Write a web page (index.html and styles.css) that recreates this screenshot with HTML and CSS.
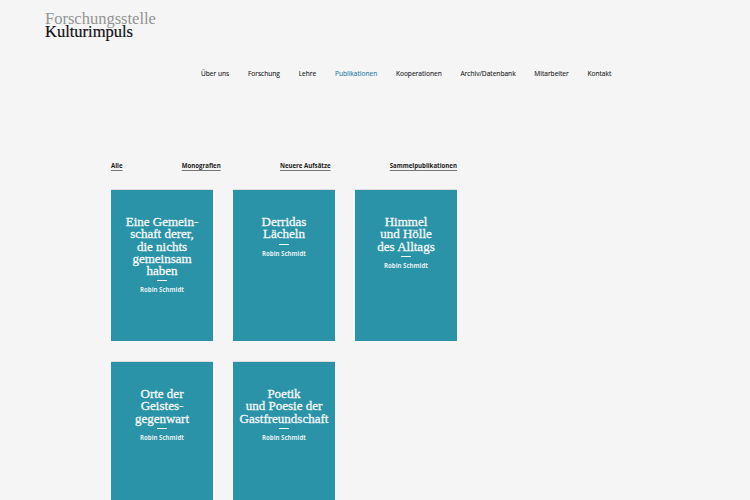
FILE: index.html
```html
<!DOCTYPE html>
<html lang="de">
<head>
<meta charset="utf-8">
<title>Publikationen – Forschungsstelle Kulturimpuls</title>
<link rel="stylesheet" href="styles.css">
</head>
<body>
<header class="header">
  <div class="logo">
    <span class="logo-top">Forschungsstelle</span>
    <span class="logo-bottom">Kulturimpuls</span>
  </div>
  <nav class="nav">
    <a href="#">Über uns</a>
    <a href="#">Forschung</a>
    <a href="#">Lehre</a>
    <a href="#" class="active">Publikationen</a>
    <a href="#">Kooperationen</a>
    <a href="#">Archiv/Datenbank</a>
    <a href="#">Mitarbeiter</a>
    <a href="#">Kontakt</a>
  </nav>
</header>
<main class="content">
  <div class="filters">
    <a href="#">Alle</a>
    <a href="#">Monografien</a>
    <a href="#">Neuere Aufsätze</a>
    <a href="#">Sammelpublikationen</a>
  </div>
  <div class="grid">
    <div class="card">
      <div class="title">Eine Gemein-<br>schaft derer,<br>die nichts<br>gemeinsam<br>haben</div>
      <div class="dash"></div>
      <div class="author">Robin Schmidt</div>
    </div>
    <div class="card">
      <div class="title">Derridas<br>Lächeln</div>
      <div class="dash"></div>
      <div class="author">Robin Schmidt</div>
    </div>
    <div class="card">
      <div class="title">Himmel<br>und Hölle<br>des Alltags</div>
      <div class="dash"></div>
      <div class="author">Robin Schmidt</div>
    </div>
    <div class="card">
      <div class="title">Orte der<br>Geistes-<br>gegenwart</div>
      <div class="dash"></div>
      <div class="author">Robin Schmidt</div>
    </div>
    <div class="card">
      <div class="title">Poetik<br>und Poesie der<br>Gastfreundschaft</div>
      <div class="dash"></div>
      <div class="author">Robin Schmidt</div>
    </div>
  </div>
</main>
</body>
</html>
```
FILE: styles.css
```css
html, body {
  margin: 0;
  padding: 0;
  background: #f5f5f5;
  height: 100%;
  overflow: hidden;
}
body {
  font-family: "Open Sans", "Liberation Sans", sans-serif;
  color: #222;
}
a {
  text-decoration: none;
  color: inherit;
}
.header {
  padding: 13px 0 0 45px;
}
.logo {
  display: flex;
  flex-direction: column;
  font-family: "Liberation Serif", "Times New Roman", serif;
  font-size: 16.5px;
  line-height: 12.5px;
}
.logo-top {
  color: #939393;
}
.logo-bottom {
  color: #111;
  -webkit-text-stroke: 0.2px #111;
}
.nav {
  display: flex;
  gap: 18.7px;
  margin-top: 30px;
  padding-left: 156px;
  font-size: 6.6px;
  line-height: 12px;
  -webkit-text-stroke: 0.1px #222;
}
.nav a {
  color: #222;
}
.nav a.active {
  color: #2b7ea6;
  -webkit-text-stroke: 0.1px #2b7ea6;
}
.content {
  padding: 81px 0 0 111px;
}
.filters {
  width: 346px;
  display: flex;
  justify-content: space-between;
  font-size: 6.1px;
  font-weight: 700;
  line-height: 10px;
}
.filters a {
  color: #222;
  text-decoration: underline;
  text-underline-offset: 2px;
  text-decoration-color: #777;
}
.grid {
  margin-top: 19px;
  display: grid;
  grid-template-columns: repeat(3, 102px);
  grid-auto-rows: 151px;
  column-gap: 20px;
  row-gap: 21px;
}
.card {
  background: #2a93a7;
  box-shadow: 0 -1px 0 #dcdcdc;
  color: #fff;
  text-align: center;
  padding-top: 26px;
  display: flex;
  flex-direction: column;
  align-items: center;
}
.title {
  font-family: "Liberation Serif", "Times New Roman", serif;
  font-size: 13px;
  line-height: 12.3px;
  color: #f4f7f7;
  -webkit-text-stroke: 0.3px #f4f7f7;
}
.dash {
  width: 10px;
  height: 1px;
  background: #f4f7f7;
  margin-top: 3px;
}
.author {
  margin-top: 4px;
  font-size: 6.1px;
  font-weight: 700;
  line-height: 9px;
  color: #e1eef0;
}
```
